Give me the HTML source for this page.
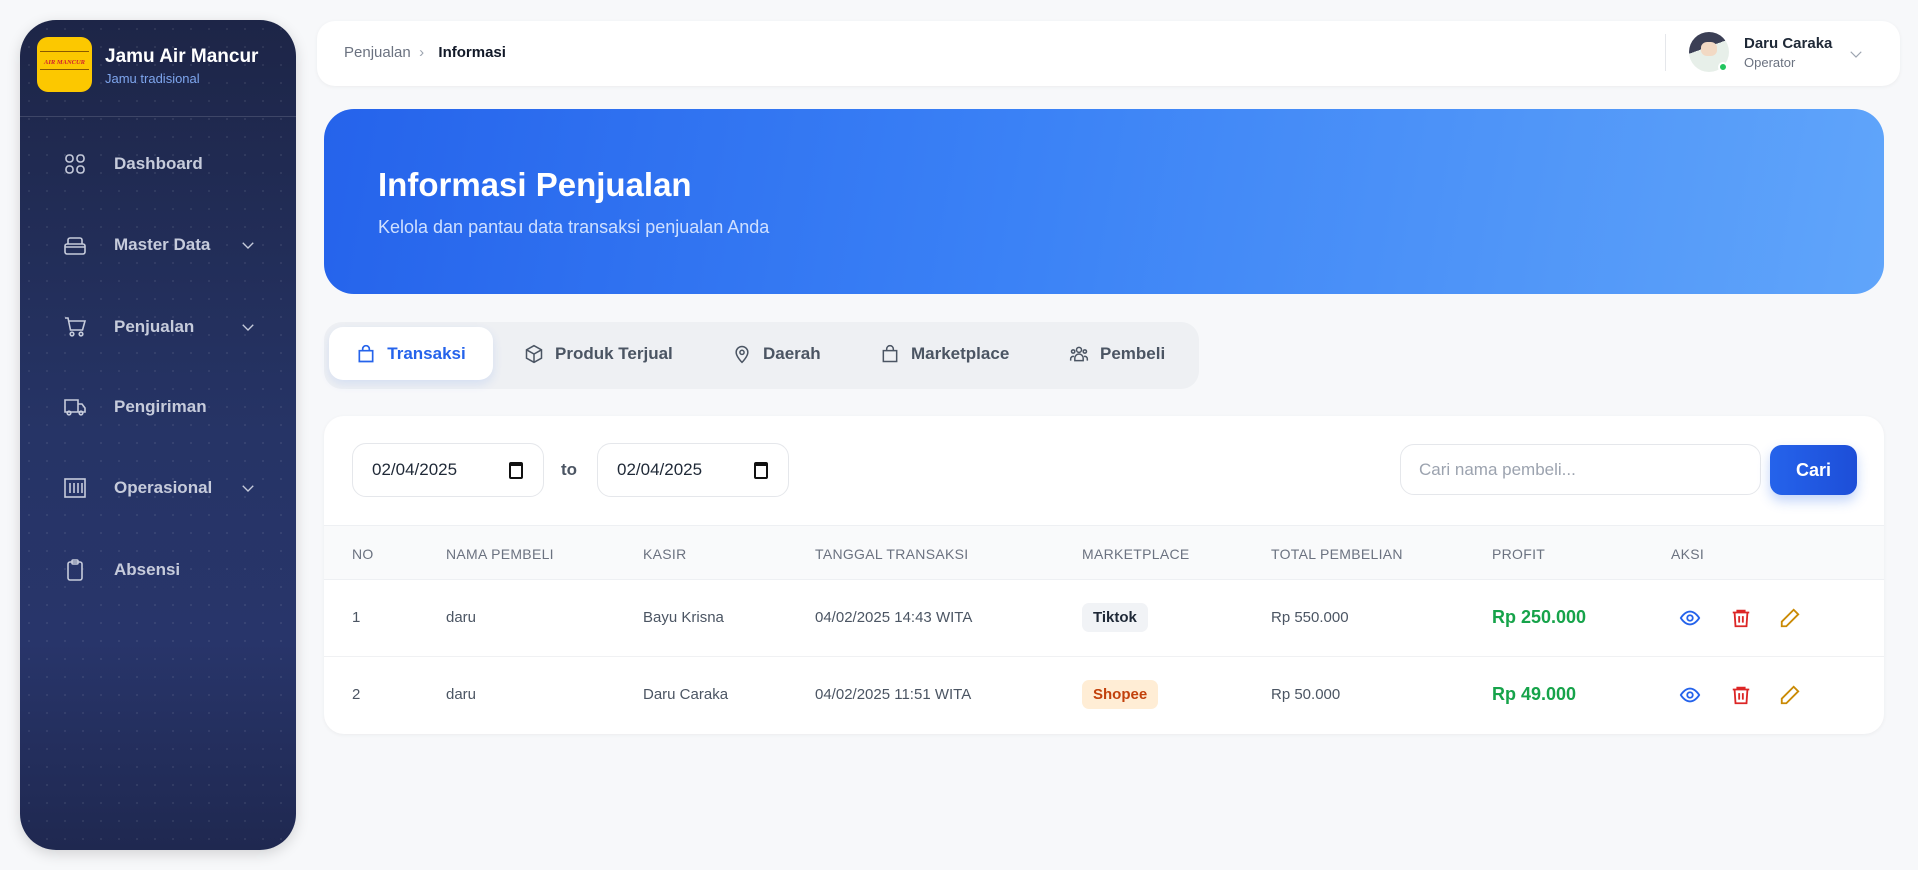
<!DOCTYPE html>
<html><head><meta charset="utf-8"><style>
*{box-sizing:border-box;margin:0;padding:0}
body{width:1918px;height:870px;background:#f7f8fa;font-family:"Liberation Sans",sans-serif;position:relative;overflow:hidden;color:#374151}
.sb{position:absolute;left:20px;top:20px;width:276px;height:830px;border-radius:36px;background:linear-gradient(180deg,#1d2547 0%,#263466 50%,#28356a 75%,#1f2850 100%);overflow:hidden;box-shadow:0 4px 14px rgba(0,0,0,.15)}
.sb:before{content:"";position:absolute;inset:0;background-image:radial-gradient(rgba(255,255,255,.08) 1px,transparent 1.2px);background-size:18px 18px}
.logo{position:absolute;left:17px;top:17px;width:55px;height:55px;border-radius:11px;background:#fcc800;overflow:hidden}
.logo i{position:absolute;left:3px;right:3px;height:1px;background:#8a5a00}
.logo b{position:absolute;left:0;right:0;top:22px;text-align:center;font:italic 700 6.5px "Liberation Serif",serif;color:#d2202f}
.brand{position:absolute;left:85px;top:26px;color:#fff;font-weight:700;font-size:19px}
.brand small{display:block;font-weight:400;font-size:13px;color:#7ea6ee;margin-top:3px}
.hr{position:absolute;left:0;right:0;top:96px;height:1px;background:rgba(255,255,255,.14)}
.mi{position:absolute;left:0;width:276px;height:30px;display:flex;align-items:center;color:#c6cbdb;font-weight:700;font-size:17px}
.mi svg.ic{position:absolute;left:43px;width:24px;height:24px}
.mi span{position:absolute;left:94px}
.mi svg.ch{position:absolute;left:219px;width:18px;height:18px}
.top{position:absolute;left:317px;top:21px;width:1583px;height:65px;background:#fff;border-radius:18px;box-shadow:0 1px 4px rgba(0,0,0,.05)}
.bc{position:absolute;left:27px;top:23px;font-size:15px;color:#6b7280}
.bc b{color:#111827;font-weight:700;margin-left:6px}
.vd{position:absolute;left:1348px;top:13px;width:1px;height:37px;background:#e5e7eb}
.av{position:absolute;left:1372px;top:11px;width:40px;height:40px;border-radius:50%;background:linear-gradient(160deg,#3b3f55 0 40%,#e7efe9 40%);overflow:hidden}
.av:after{content:"";position:absolute;left:12px;top:10px;width:16px;height:14px;border-radius:40%;background:#f2d9c4}
.dot{position:absolute;left:1401px;top:41px;width:10px;height:10px;border-radius:50%;background:#22c55e;border:2px solid #fff}
.un{position:absolute;left:1427px;top:14px;font-size:15px;font-weight:700;color:#1f2937}
.un small{display:block;font-weight:400;font-size:13px;color:#6b7280;margin-top:3px}
.banner{position:absolute;left:324px;top:109px;width:1560px;height:185px;border-radius:30px;background:linear-gradient(100deg,#2563eb 0%,#3b82f6 45%,#60a5fa 100%)}
.banner h1{position:absolute;left:54px;top:57px;color:#fff;font-size:33px;font-weight:700}
.banner p{position:absolute;left:54px;top:108px;color:#cfe0ff;font-size:18px}
.tabs{position:absolute;left:324px;top:322px;width:875px;height:67px;border-radius:18px;background:#eef0f3}
.tab{position:absolute;top:5px;height:53px;display:flex;align-items:center;font-size:17px;font-weight:700;color:#4b5563;gap:11px}
.tab svg{width:20px;height:20px}
.tab.act{left:5px;width:164px;background:#fff;border-radius:14px;justify-content:center;color:#2563eb;box-shadow:0 4px 10px rgba(37,99,235,.12)}
.card{position:absolute;left:324px;top:416px;width:1560px;height:318px;background:#fff;border-radius:20px;box-shadow:0 1px 4px rgba(0,0,0,.05);overflow:hidden}
.di{position:absolute;top:27px;width:192px;height:54px;border:1px solid #e5e7eb;border-radius:14px;font-size:17px;color:#1f2937;padding:0 0 0 19px;display:flex;align-items:center}
.di i{position:absolute;right:20px;top:18px;width:14px;height:17px;border:2px solid #111;border-top-width:4px;border-radius:2px}
.to{position:absolute;left:237px;top:44px;font-size:17px;font-weight:700;color:#4b5563}
.srch{position:absolute;left:1076px;top:28px;width:361px;height:51px;border:1px solid #e5e7eb;border-radius:14px;font-size:17px;color:#9ca3af;padding-left:18px;display:flex;align-items:center}
.btn{position:absolute;left:1446px;top:29px;width:87px;height:50px;border-radius:12px;background:linear-gradient(90deg,#2563eb,#1d4ed8);color:#fff;font-weight:700;font-size:18px;display:flex;align-items:center;justify-content:center;box-shadow:0 6px 12px rgba(37,99,235,.28)}
.th{position:absolute;left:0;top:109px;width:100%;height:55px;background:#f9fafb;border-top:1px solid #eef0f3;border-bottom:1px solid #eef0f3}
.c{position:absolute;white-space:nowrap}
.th .c{top:20px;font-size:14px;color:#6b7280;letter-spacing:.3px}
.row{position:absolute;left:0;width:100%;height:77px;border-bottom:1px solid #f0f1f3}
.row .c{top:29px;font-size:15px;color:#4b5563}
.row .p{top:27px;font-size:18px;font-weight:700;color:#16a34a}
.badge{top:23px!important;padding:6px 11px;border-radius:7px;font-weight:700;font-size:15px!important}
.row svg{position:absolute;top:27px;width:22px;height:22px}
</style></head><body>
<div class="sb">
 <div class="logo"><i style="top:14px"></i><b>AIR MANCUR</b><i style="top:32px"></i></div>
 <div class="brand">Jamu Air Mancur<small>Jamu tradisional</small></div>
 <div class="hr"></div>
 <div class="mi" style="top:129px"><svg class="ic" viewBox="0 0 24 24" fill="none" stroke="#c6cbdb" stroke-width="1.6"><rect x="3" y="3" width="7" height="7" rx="3"/><rect x="14" y="3" width="7" height="7" rx="3"/><rect x="3" y="14" width="7" height="7" rx="3"/><rect x="14" y="14" width="7" height="7" rx="3"/></svg><span>Dashboard</span></div>
 <div class="mi" style="top:210px"><svg class="ic" viewBox="0 0 24 24" fill="none" stroke="#c6cbdb" stroke-width="1.6"><rect x="2" y="11" width="20" height="10" rx="2"/><path d="M5 11V7a2 2 0 0 1 2-2h10a2 2 0 0 1 2 2v4M2 14h20"/></svg><span>Master Data</span><svg class="ch" viewBox="0 0 24 24" fill="none" stroke="#c6cbdb" stroke-width="1.8"><path d="M5 9l7 7 7-7"/></svg></div>
 <div class="mi" style="top:292px"><svg class="ic" viewBox="0 0 24 24" fill="none" stroke="#c6cbdb" stroke-width="1.6"><path d="M2 3h3l2.5 12h12L22 6H6"/><circle cx="9" cy="19" r="1.8"/><circle cx="18" cy="19" r="1.8"/></svg><span>Penjualan</span><svg class="ch" viewBox="0 0 24 24" fill="none" stroke="#c6cbdb" stroke-width="1.8"><path d="M5 9l7 7 7-7"/></svg></div>
 <div class="mi" style="top:372px"><svg class="ic" viewBox="0 0 24 24" fill="none" stroke="#c6cbdb" stroke-width="1.6"><path d="M2 5h13v12H2zM15 9h4l3 4v4h-7"/><circle cx="6" cy="18" r="1.8"/><circle cx="18" cy="18" r="1.8"/></svg><span>Pengiriman</span></div>
 <div class="mi" style="top:453px"><svg class="ic" viewBox="0 0 24 24" fill="none" stroke="#c6cbdb" stroke-width="1.6"><rect x="2" y="3" width="20" height="18"/><path d="M7 7v10M11 7v10M15 7v10M19 7v10"/></svg><span>Operasional</span><svg class="ch" viewBox="0 0 24 24" fill="none" stroke="#c6cbdb" stroke-width="1.8"><path d="M5 9l7 7 7-7"/></svg></div>
 <div class="mi" style="top:535px"><svg class="ic" viewBox="0 0 24 24" fill="none" stroke="#c6cbdb" stroke-width="1.6"><rect x="5" y="4" width="14" height="18" rx="2"/><rect x="9" y="2" width="6" height="4" rx="1"/></svg><span>Absensi</span></div>
</div>
<div class="top">
 <div class="bc">Penjualan &nbsp;<span style="color:#9ca3af">›</span>&nbsp; <b>Informasi</b></div>
 <div class="vd"></div><div class="av"></div><div class="dot"></div>
 <div class="un">Daru Caraka<small>Operator</small></div>
 <svg style="position:absolute;left:1530px;top:24px" width="18" height="18" viewBox="0 0 24 24" fill="none" stroke="#9ca3af" stroke-width="1.6"><path d="M5 9l7 7 7-7"/></svg>
</div>
<div class="banner"><h1>Informasi Penjualan</h1><p>Kelola dan pantau data transaksi penjualan Anda</p></div>
<div class="tabs">
 <div class="tab act"><svg viewBox="0 0 24 24" fill="none" stroke="#2563eb" stroke-width="2"><path d="M4 8h16v13H4zM8 8V6a4 4 0 0 1 8 0v2"/></svg>Transaksi</div>
 <div class="tab" style="left:200px"><svg viewBox="0 0 24 24" fill="none" stroke="#4b5563" stroke-width="1.8"><path d="M12 2l9 5v10l-9 5-9-5V7zM3 7l9 5 9-5M12 12v10"/></svg>Produk Terjual</div>
 <div class="tab" style="left:408px"><svg viewBox="0 0 24 24" fill="none" stroke="#4b5563" stroke-width="1.8"><path d="M12 22s7-7 7-12a7 7 0 0 0-14 0c0 5 7 12 7 12z"/><circle cx="12" cy="10" r="2.5"/></svg>Daerah</div>
 <div class="tab" style="left:556px"><svg viewBox="0 0 24 24" fill="none" stroke="#4b5563" stroke-width="1.8"><path d="M4 8h16v13H4zM8 8V6a4 4 0 0 1 8 0v2"/></svg>Marketplace</div>
 <div class="tab" style="left:745px"><svg viewBox="0 0 24 24" fill="none" stroke="#4b5563" stroke-width="1.8"><circle cx="12" cy="7" r="3"/><circle cx="5" cy="9" r="2"/><circle cx="19" cy="9" r="2"/><path d="M7 20v-3a5 5 0 0 1 10 0v3zM2 20v-2a3 3 0 0 1 4-3M22 20v-2a3 3 0 0 0-4-3"/></svg>Pembeli</div>
</div>
<div class="card">
 <div class="di" style="left:28px">02/04/2025<i></i></div>
 <div class="to">to</div>
 <div class="di" style="left:273px">02/04/2025<i></i></div>
 <div class="srch">Cari nama pembeli...</div>
 <div class="btn">Cari</div>
 <div class="th"><span class="c" style="left:28px">NO</span><span class="c" style="left:122px">NAMA PEMBELI</span><span class="c" style="left:319px">KASIR</span><span class="c" style="left:491px">TANGGAL TRANSAKSI</span><span class="c" style="left:758px">MARKETPLACE</span><span class="c" style="left:947px">TOTAL PEMBELIAN</span><span class="c" style="left:1168px">PROFIT</span><span class="c" style="left:1347px">AKSI</span></div>
 <div class="row" style="top:164px"><span class="c" style="left:28px">1</span><span class="c" style="left:122px">daru</span><span class="c" style="left:319px">Bayu Krisna</span><span class="c" style="left:491px">04/02/2025 14:43 WITA</span><span class="c badge" style="left:758px;background:#f1f3f6;color:#1f2937">Tiktok</span><span class="c" style="left:947px">Rp 550.000</span><span class="c p" style="left:1168px">Rp 250.000</span>
  <svg style="left:1355px" viewBox="0 0 24 24" fill="none" stroke="#2563eb" stroke-width="2"><path d="M2 12s4-7 10-7 10 7 10 7-4 7-10 7S2 12 2 12z"/><circle cx="12" cy="12" r="3"/></svg>
  <svg style="left:1406px" viewBox="0 0 24 24" fill="none" stroke="#dc2626" stroke-width="2"><path d="M3 6h18M8 6V4h8v2M5 6l1 15h12l1-15M10 10v7M14 10v7"/></svg>
  <svg style="left:1455px" viewBox="0 0 24 24" fill="none" stroke="#ca8a04" stroke-width="2"><path d="M16 3l5 5L8 21H3v-5z"/></svg></div>
 <div class="row" style="top:241px;border:none"><span class="c" style="left:28px">2</span><span class="c" style="left:122px">daru</span><span class="c" style="left:319px">Daru Caraka</span><span class="c" style="left:491px">04/02/2025 11:51 WITA</span><span class="c badge" style="left:758px;background:#ffedd5;color:#c2410c">Shopee</span><span class="c" style="left:947px">Rp 50.000</span><span class="c p" style="left:1168px">Rp 49.000</span>
  <svg style="left:1355px" viewBox="0 0 24 24" fill="none" stroke="#2563eb" stroke-width="2"><path d="M2 12s4-7 10-7 10 7 10 7-4 7-10 7S2 12 2 12z"/><circle cx="12" cy="12" r="3"/></svg>
  <svg style="left:1406px" viewBox="0 0 24 24" fill="none" stroke="#dc2626" stroke-width="2"><path d="M3 6h18M8 6V4h8v2M5 6l1 15h12l1-15M10 10v7M14 10v7"/></svg>
  <svg style="left:1455px" viewBox="0 0 24 24" fill="none" stroke="#ca8a04" stroke-width="2"><path d="M16 3l5 5L8 21H3v-5z"/></svg></div>
</div>
</body></html>
